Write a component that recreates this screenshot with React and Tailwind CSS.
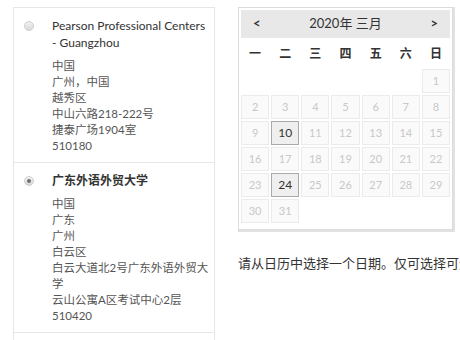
import React from 'react';

const font = { fontFamily: 'Lato, "Noto Sans CJK SC", sans-serif' };

const centers = [
  {
    id: 1,
    title: ['Pearson Professional Centers', '- Guangzhou'],
    lines: ['中国', '广州，中国', '越秀区', '中山六路218-222号', '捷泰广场1904室', '510180'],
    checked: false,
  },
  {
    id: 2,
    title: ['广东外语外贸大学'],
    lines: ['中国', '广东', '广州', '白云区', '白云大道北2号广东外语外贸大学', '云山公寓A区考试中心2层', '510420'],
    checked: true,
  },
];

const Radio = ({ checked }) => (
  <div className="mt-[4px] w-[10px] h-[10px] shrink-0 rounded-full border border-[#cfcfcf] bg-gradient-to-b from-[#f2f2f2] to-[#d8d8d8] flex items-center justify-center">
    {checked && <div className="w-[4px] h-[4px] rounded-full bg-[#6f6f6f]" />}
  </div>
);

const CenterItem = ({ c }) => (
  <div className="flex border-b border-[#e6e6e6] pl-[10px] pt-[9px] pb-[8px]">
    <Radio checked={c.checked} />
    <div className="ml-[18px]">
      <div className={`w-[160px] text-[12px] leading-[17px] text-[#333] ${c.checked ? 'font-bold' : 'font-normal'}`}>
        {c.title.map((t) => <div key={t} className="whitespace-nowrap">{t}</div>)}
      </div>
      <div className="mt-[7px] w-[162px] text-[11.5px] leading-[16px] text-[#555]">
        {c.lines.map((l) => <div key={l}>{l}</div>)}
      </div>
    </div>
  </div>
);

const weekdays = ['一', '二', '三', '四', '五', '六', '日'];
const selected = [10, 24];

const Calendar = () => {
  const cells = [];
  for (let i = 0; i < 6; i++) cells.push(null);
  for (let d = 1; d <= 31; d++) cells.push(d);

  return (
    <div className="w-[215px] border border-[#dcdcdc] shadow-[1px_1px_0_1px_#e2e2e2] p-[2px] pb-[6px]">
      <div className="h-[28px] bg-[#e8e8e8] flex items-center justify-between px-[12px] text-[#333]">
        <span className="text-[13px] font-bold">&lt;</span>
        <span className="text-[13px]">2020年 三月</span>
        <span className="text-[13px] font-bold">&gt;</span>
      </div>
      <div className="h-[31px] grid grid-cols-7 gap-[2px] items-center text-center text-[12px] font-bold text-[#333]">
        {weekdays.map((w) => <span key={w}>{w}</span>)}
      </div>
      <div className="grid grid-cols-7 gap-[2px]">
        {cells.map((d, i) =>
          d === null ? (
            <div key={i} className="h-[24px]" />
          ) : selected.includes(d) ? (
            <div key={i} className="h-[24px] border border-[#aaa] bg-[#efefef] flex items-center justify-center text-[12px] text-[#333]">{d}</div>
          ) : (
            <div key={i} className="h-[24px] border border-[#ebebeb] bg-[#fafafa] flex items-center justify-center text-[11px] text-[#c8c8c8]">{d}</div>
          )
        )}
      </div>
    </div>
  );
};

export default function App() {
  return (
    <div className="w-[460px] h-[340px] overflow-hidden bg-white flex pl-[13px] pt-[7px]" style={font}>
      <div className="w-[202px] shrink-0 border-t border-x border-[#e6e6e6]">
        {centers.map((c) => <CenterItem key={c.id} c={c} />)}
        <div className="h-[40px]" />
      </div>
      <div className="ml-[23px] shrink-0">
        <Calendar />
        <p className="mt-[24px] text-[13px] leading-[18px] text-[#333] whitespace-nowrap">请从日历中选择一个日期。仅可选择可选日期。</p>
      </div>
    </div>
  );
}
